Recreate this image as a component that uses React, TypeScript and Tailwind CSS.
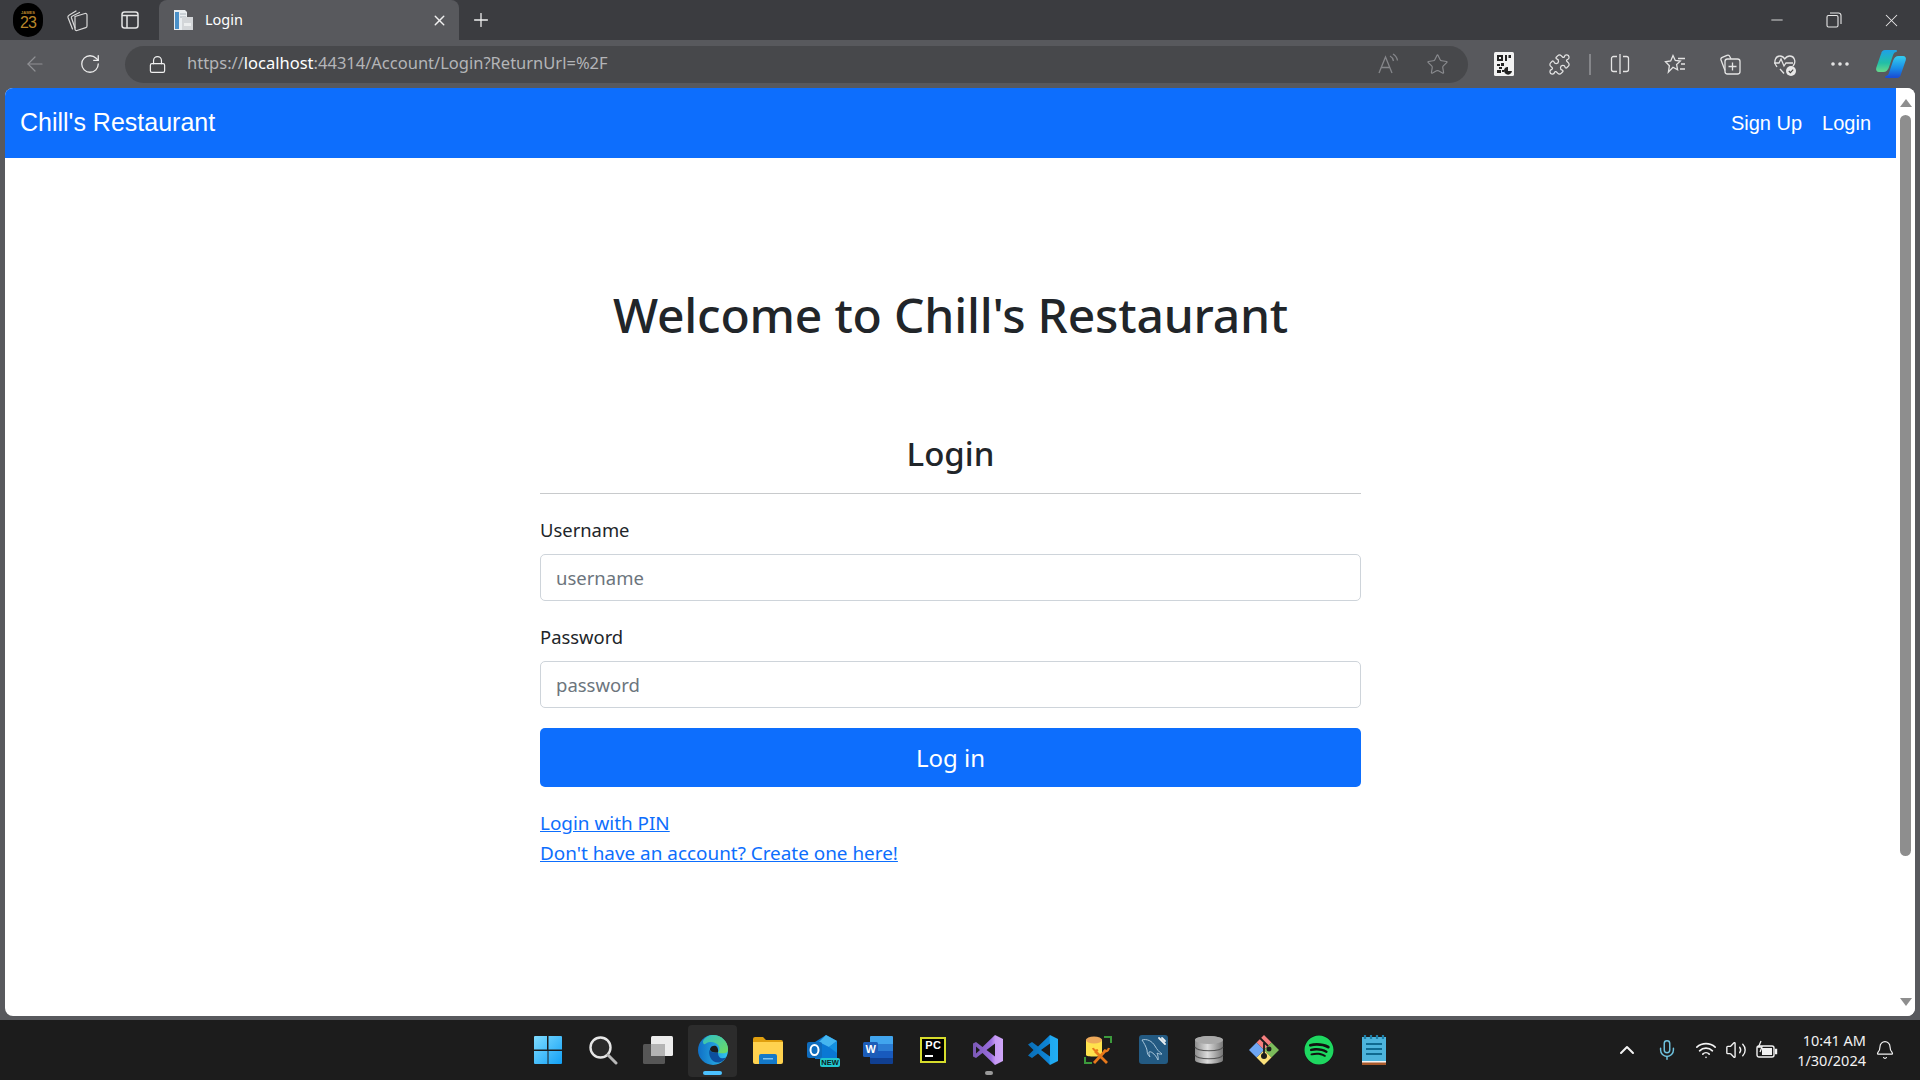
import React from "react";
import { FaSpotify } from "react-icons/fa";
import {
  Plus, X, Minus, ArrowLeft, RotateCw, Lock, Star, Puzzle, MoreHorizontal, ChevronUp, Mic, Wifi, Volume2, Bell,
} from "lucide-react";

const ui = "font-['Noto_Sans','Open_Sans',sans-serif]";

function Slot({ w = "w-[55px]", children }: { w?: string; children: React.ReactNode }) {
  return <div className={`${w} h-full flex items-center justify-center shrink-0`}>{children}</div>;
}

function Profile() {
  return (
    <div className="w-[30px] h-[34px] rounded-full bg-black flex flex-col items-center justify-center">
      <span className="font-['Liberation_Sans',sans-serif] text-[4px] leading-[5px] text-[#b8862a] font-bold">JAMES</span>
      <span className="font-['Liberation_Sans',sans-serif] text-[16px] leading-[16px] text-[#b8862a] tracking-[-1px]">23</span>
    </div>
  );
}

function TabsIcon() {
  return (
    <svg width="24" height="24" viewBox="0 0 24 24" fill="none" stroke="#d8d8d8" strokeWidth="1.200" strokeLinecap="round">
      <path d="M10 8.500 20 5.500c1-.3 2 .4 2 1.500v11c0 1-.5 1.500-1.300 1.700L12 22.500c-1 .3-2-.4-2-1.500z" />
      <path d="M10 20 6.500 10c-.3-1 0-1.700 1-2l7-3.500" />
      <path d="M7.500 21 3 9.500c-.3-1 0-1.800 1-2.300L11 3" />
    </svg>
  );
}
function VerticalTabs() {
  return (
    <svg width="20" height="20" viewBox="0 0 20 20" fill="none" stroke="#e4e4e4" strokeWidth="1.500">
      <rect x="2" y="2" width="16" height="16" rx="2.500" />
      <path d="M2 5.500h16M7 5.500V18" />
    </svg>
  );
}
function Favicon() {
  return (
    <svg width="22" height="22" viewBox="0 0 22 22">
      <path d="M2 1h11l2 2v18H2z" fill="#e9edf0" />
      <rect x="3" y="3" width="4" height="17" fill="#4a90c8" />
      <path d="M8 5h6M8 8h6" stroke="#aab4bc" />
      <rect x="10" y="8" width="11" height="13" fill="#d3d6d9" />
      <rect x="12" y="14" width="7" height="3" fill="#eceeef" />
    </svg>
  );
}
function ReadAloud() {
  return (
    <svg width="24" height="24" viewBox="0 0 24 24" fill="none" stroke="#85868a" strokeWidth="1.300">
      <path d="M3 21 9.500 5 16 21M5.500 15.500h8" />
      <path d="M14 4c2 1 3 2.500 3.500 5M17 2c2.500 1.500 4 3.500 4.500 6.500" />
    </svg>
  );
}
function QrIcon() {
  return (
    <svg width="20" height="24" viewBox="0 0 20 24">
      <rect width="20" height="24" rx="1.500" fill="#f2f2f2" />
      <path d="M3 3h6v6H3zM11 3h2v6h-2zM14.500 3H17v3h-2.500zM3 12h3v2H3zM7 11h3v3H7zM5 15h3v2H5zM3 18h4v3H3zM8 18h2v2H8z" fill="#222" />
      <path d="M11 16a4 4 0 1 0 7 3h-4v-4a4 4 0 0 0-3 1z" fill="#222" />
      <rect x="5" y="5" width="2" height="2" fill="#f2f2f2" />
    </svg>
  );
}
function SplitIcon() {
  return (
    <svg width="22" height="22" viewBox="0 0 22 22" fill="none" stroke="#e4e4e4" strokeWidth="1.300">
      <path d="M8 3.500H4.500A2 2 0 0 0 2.500 5.500v11a2 2 0 0 0 2 2H8M14 3.500h3.500a2 2 0 0 1 2 2v11a2 2 0 0 1-2 2H14M11 1v20" />
    </svg>
  );
}
function FavsIcon() {
  return (
    <svg width="24" height="24" viewBox="0 0 24 24" fill="none" stroke="#e4e4e4" strokeWidth="1.300">
      <path d="M10 3.500l2.300 5 5 .6-3.700 3.500 1 5.200L10 15.200 5.400 20l1-6.300L2.500 9.800l5.200-.8z" />
      <path d="M15 6.500h7M18 12h4M17 17h5" />
    </svg>
  );
}
function CollectionsIcon() {
  return (
    <svg width="24" height="24" viewBox="0 0 24 24" fill="none" stroke="#e4e4e4" strokeWidth="1.300">
      <rect x="7" y="7" width="15" height="15" rx="2.500" />
      <path d="M14.500 10.500v8M10.500 14.500h8" />
      <path d="M7 18.500 3 8c-.4-1.200.1-2.200 1.300-2.700L9 3.300c1.300-.5 2.300 0 2.800 1.200L13 7" />
    </svg>
  );
}
function HeartIcon() {
  return (
    <svg width="26" height="26" viewBox="0 0 26 26" fill="none" stroke="#e4e4e4" strokeWidth="1.300">
      <path d="M5 16 3.500 13.500C2 10 3.500 5 8 5c2.500 0 3.800 1.500 4.800 3 1-1.500 2.500-3 5-3 4.500 0 6 5 4.300 8.500L21 15" />
      <path d="M2 12h5l2-4 3 7 2-3h7" />
      <path d="M8 18l4 4.500" />
      <circle cx="19" cy="20" r="5" fill="#e8e8e8" stroke="none" />
      <path d="M16.800 20l1.600 1.600 2.800-3" stroke="#444" strokeWidth="1.200" />
    </svg>
  );
}
function Copilot() {
  return (
    <svg width="32" height="30" viewBox="0 0 32 30">
      <defs>
        <linearGradient id="cp1" x1="0" y1="0" x2="0" y2="1">
          <stop offset="0" stopColor="#1fa3e4" />
          <stop offset="0.6" stopColor="#22bfa6" />
          <stop offset="1" stopColor="#62d68c" />
        </linearGradient>
        <linearGradient id="cp2" x1="0" y1="0" x2="0" y2="1">
          <stop offset="0" stopColor="#33c8ee" />
          <stop offset="0.55" stopColor="#1a8fe8" />
          <stop offset="1" stopColor="#1a4fd4" />
        </linearGradient>
      </defs>
      <path d="M10 2h11c-2 0-3 1-3.800 3.500L13 18c-.8 2.500-2 4-4.500 4H4c-1.500 0-2.300-1.300-1.800-3L7 5c.5-2 1.500-3 3-3z" fill="url(#cp1)" stroke="url(#cp1)" strokeWidth="2" strokeLinejoin="round" />
      <path d="M22 28H11c2 0 3-1 3.800-3.500L19 12c.8-2.500 2-4 4.500-4H28c1.500 0 2.300 1.300 1.800 3L25 25c-.5 2-1.500 3-3 3z" fill="url(#cp2)" stroke="url(#cp2)" strokeWidth="2" strokeLinejoin="round" />
    </svg>
  );
}

/* taskbar icons */
function WinLogo() {
  return (
    <svg width="30" height="30" viewBox="0 0 30 30">
      <defs>
        <linearGradient id="w1" x1="0" y1="0" x2="1" y2="1">
          <stop offset="0" stopColor="#7fdcff" />
          <stop offset="1" stopColor="#12a0f5" />
        </linearGradient>
      </defs>
      <path d="M1 2a1 1 0 0 1 1-1h12v13.500H1zM15.500 1H28a1 1 0 0 1 1 1v12.500H15.500zM1 16h13.500v13H2a1 1 0 0 1-1-1zM15.500 16H29v12a1 1 0 0 1-1 1H15.500z" fill="url(#w1)" />
    </svg>
  );
}
function SearchIcon() {
  return (
    <svg width="30" height="30" viewBox="0 0 30 30" fill="#2a2a2a">
      <circle cx="12.500" cy="12.500" r="10" strokeWidth="2.400" stroke="#e6e6e6" />
      <path d="M20 20l8 8" strokeWidth="3" strokeLinecap="round" stroke="#b8b8b8" />
    </svg>
  );
}
function TaskView() {
  return (
    <svg width="32" height="30" viewBox="0 0 32 30">
      <rect x="9" y="1" width="22" height="20" rx="1.500" fill="#ececec" />
      <rect x="1" y="9" width="22" height="20" rx="1.500" fill="#5b5b5b" fillOpacity="0.92" />
      <rect x="9" y="9" width="14" height="12" fill="#b4b4b4" />
    </svg>
  );
}
function Edge() {
  return (
    <svg width="32" height="32" viewBox="0 0 32 32">
      <defs>
        <linearGradient id="e1" x1="0" y1="0" x2="1" y2="0">
          <stop offset="0" stopColor="#0f6fc6" />
          <stop offset="1" stopColor="#31c4ee" />
        </linearGradient>
        <linearGradient id="e2" x1="0" y1="0" x2="1" y2="1">
          <stop offset="0" stopColor="#2fc0c8" />
          <stop offset="1" stopColor="#70dc5e" />
        </linearGradient>
      </defs>
      <circle cx="16" cy="16" r="15" fill="url(#e1)" />
      <path d="M6 7C9 2 13 1 16 1c9 0 15 7 15 14 0 2-.5 3-1.500 3.500-2.500 1.200-7 1-8.500 0 2-2 2-4.500.5-7C19 8 13 7 9 9.500 7.500 10.500 6 11 6 7z" fill="url(#e2)" />
      <path d="M21 18.500c-3 0-8 0-8.500-3-1.500 5 1.500 14 10 13 2-.5 5-2.500 6.500-5-3 1.500-8 1.500-8-5z" fill="#0c4f9e" />
      <path d="M13 15c.5-3 4-4 6-3 2 1 2.500 4.500 2 6.500-3 0-8 0-8-3.500z" fill="#1c1c1c" />
    </svg>
  );
}
function Folder() {
  return (
    <svg width="32" height="28" viewBox="0 0 32 28">
      <path d="M1 3a2 2 0 0 1 2-2h8l3 3h15a2 2 0 0 1 2 2v4H1z" fill="#e09f0e" />
      <path d="M1 6h30v20a2 2 0 0 1-2 2H3a2 2 0 0 1-2-2z" fill="#ffd24f" />
      <path d="M7 20a2 2 0 0 1 2-2h14a2 2 0 0 1 2 2v8H7z" fill="#1479c9" />
      <rect x="11" y="22" width="10" height="1.500" fill="#7fc4f0" />
    </svg>
  );
}
function Outlook() {
  return (
    <div className="relative w-[32px] h-[30px]">
      <svg width="32" height="30" viewBox="0 0 32 30" className="absolute left-0 top-0">
        <path d="M8 7 19 0l11 6v18H8z" fill="#0a78d4" />
        <path d="M19 0l11 6-8 6-10-5z" fill="#44b6f0" />
        <path d="M22 12l8-6v12z" fill="#1490df" />
        <rect x="0" y="7" width="15" height="16" rx="2" fill="#0f6cbd" />
        <ellipse cx="7.500" cy="15" rx="4" ry="5" fill="none" stroke="#fff" strokeWidth="2" />
      </svg>
      <span className="absolute right-[-1px] bottom-[-2px] w-[20px] h-[9px] rounded-[2px] bg-[#22c8d0] text-[#0d1c20] font-['Liberation_Sans',sans-serif] font-bold text-[7.500px] leading-[9px] text-center">NEW</span>
    </div>
  );
}
function Word() {
  return (
    <div className="relative w-[30px] h-[28px]">
      <svg width="30" height="28" viewBox="0 0 30 28" className="absolute left-0 top-0">
        <path d="M7 1a1 1 0 0 1 1-1h21a1 1 0 0 1 1 1v7H7z" fill="#41a5ee" />
        <rect x="7" y="8" width="23" height="7" fill="#2b7cd3" />
        <rect x="7" y="15" width="23" height="7" fill="#185abd" />
        <path d="M7 22h23v5a1 1 0 0 1-1 1H8a1 1 0 0 1-1-1z" fill="#103f91" />
        <rect x="0" y="6" width="15" height="15" rx="1.500" fill="#1c5cb8" />
      </svg>
      <span className="absolute left-0 top-[6px] w-[15px] text-center text-white font-['Liberation_Sans',sans-serif] font-bold text-[11px] leading-[15px]">W</span>
    </div>
  );
}
function PyCharm() {
  return (
    <div className="w-[26px] h-[26px] bg-black border-[2px] border-[#d6dc2c] flex flex-col pl-[3px]">
      <span className="text-white font-['Liberation_Sans',sans-serif] font-bold text-[11px] leading-[13px] tracking-[0.5px]">PC</span>
      <span className="w-[8px] h-[2px] bg-white mt-[3px]" />
    </div>
  );
}
function VS() {
  return (
    <svg width="32" height="32" viewBox="0 0 32 32">
      <defs>
        <linearGradient id="vs" x1="0" y1="0" x2="1" y2="0">
          <stop offset="0" stopColor="#7a58b4" />
          <stop offset="0.6" stopColor="#9a6ee0" />
          <stop offset="0.75" stopColor="#c79af5" />
          <stop offset="1" stopColor="#cfa6f8" />
        </linearGradient>
      </defs>
      <path fillRule="evenodd" d="M23 1 10.500 13 4 8 1 9.500v13L4 24l6.500-5L23 31l8-4V5zM23 9.500v13L14.500 16zM4 12.500 8 16l-4 3.500z" fill="url(#vs)" />
    </svg>
  );
}
function VSCode() {
  return (
    <svg width="32" height="32" viewBox="0 0 32 32">
      <defs>
        <linearGradient id="vc" x1="0" y1="0" x2="1" y2="0">
          <stop offset="0" stopColor="#0a6db5" />
          <stop offset="0.7" stopColor="#0e86d8" />
          <stop offset="0.75" stopColor="#1fa8f0" />
          <stop offset="1" stopColor="#22aef5" />
        </linearGradient>
      </defs>
      <path fillRule="evenodd" d="M23 1 11 12.500 5 8 1 10.500 6.500 16 1 21.500 5 24l6-4.500L23 31l8-4V5zM23 9.500v13L14 16z" fill="url(#vc)" />
    </svg>
  );
}
function DbTools() {
  return (
    <svg width="30" height="30" viewBox="0 0 30 30" fill="none">
      <path d="M3 5c0-2 16-2 16 0v15c0 2-16 2-16 0z" fill="#ffe24d" />
      <ellipse cx="11" cy="5" rx="8" ry="3.500" fill="#eda95a" />
      <path d="M21 2h7v6M2 22v6h7" stroke="#3c9a3c" strokeWidth="2" />
      <path d="M11 28 23 15M12 16l12 12" stroke="#e8791b" strokeWidth="2.800" />
      <path d="M10 13c1 3 3 3 5 2M21 15c2 2 4 1 5-2" stroke="#e8791b" strokeWidth="2.200" />
    </svg>
  );
}
function Workbench() {
  return (
    <svg width="29" height="29" viewBox="0 0 29 29" fill="none">
      <rect width="29" height="29" rx="3" fill="#235a82" />
      <path d="M3 5c5-1.500 10 1 13 6 2 3.500 4 6 7 8-2 .5-4-.3-5-1 .8 2.500 1.500 4 1 7-1.500-3-3-5.500-6-7.500-1-.7-2.500-1-3-.5-.2 2 .3 3.500 1 5-2-1.500-3-4-3-7C6.800 11 5 8 3 5z" stroke="#a9c6da" strokeWidth="1" />
      <path d="M20 3l6 6M23 3l3 3" stroke="#e8eef2" strokeWidth="1.800" strokeLinecap="round" />
    </svg>
  );
}
function DbStack() {
  return (
    <svg width="30" height="30" viewBox="0 0 30 30">
      <defs>
        <linearGradient id="db" x1="0" y1="0" x2="1" y2="0">
          <stop offset="0" stopColor="#8e8e8e" />
          <stop offset="0.45" stopColor="#dcdcdc" />
          <stop offset="1" stopColor="#777" />
        </linearGradient>
      </defs>
      <path d="M1 5c0-5 28-5 28 0v20c0 5-28 5-28 0z" fill="url(#db)" />
      <ellipse cx="15" cy="5" rx="14" ry="4" fill="#a8a8a8" />
      <path d="M1 12c2 5 26 5 28 0M1 20c2 5 26 5 28 0" stroke="#555" strokeWidth="1.200" fill="none" />
    </svg>
  );
}
function GitDiamond() {
  return (
    <svg width="32" height="32" viewBox="0 0 32 32">
      <path d="M16 1l7.500 7.500-7.500 7.500-7.500-7.500z" fill="#f57f7f" />
      <path d="M31 16l-7.500 7.500-7.500-7.500 7.500-7.500z" fill="#7cbc5b" />
      <path d="M16 31l-7.500-7.500 7.500-7.500 7.500 7.500z" fill="#fbe07a" />
      <path d="M1 16l7.500-7.500 7.500 7.500-7.500 7.500z" fill="#6fa6f2" />
      <path d="M12 4l8 8M16 9v14" stroke="#1c1c1c" strokeWidth="1.800" fill="none" />
      <circle cx="16" cy="22" r="3" fill="#1c1c1c" />
      <circle cx="21" cy="15" r="2.500" fill="#1c1c1c" />
    </svg>
  );
}
function Notepad() {
  return (
    <svg width="24" height="30" viewBox="0 0 24 30">
      <rect x="0" y="2" width="24" height="27" fill="#4db4dc" />
      <rect x="0" y="26" width="24" height="4" fill="#a8592a" />
      <rect x="0" y="26" width="24" height="1.500" fill="#f2f2f2" />
      <path d="M3 0v4M9 0v4M15 0v4M21 0v4" stroke="#1d7fa8" strokeWidth="2.200" />
      <path d="M4 9h16M4 14h16M4 19h16" stroke="#0f6a90" strokeWidth="2" />
    </svg>
  );
}

function Battery() {
  return (
    <svg width="22" height="20" viewBox="0 0 22 20" fill="none" stroke="#f2f2f2" strokeWidth="1.400">
      <rect x="1" y="6" width="17" height="11" rx="2" />
      <rect x="6" y="8" width="10" height="7" fill="#f2f2f2" stroke="none" />
      <path d="M19 9.500h1.500v4H19" fill="#f2f2f2" />
      <path d="M5 1 2.500 7H6l-2 5" stroke="#f2f2f2" strokeWidth="1.300" />
    </svg>
  );
}

const taskIcons = [
  WinLogo, SearchIcon, TaskView, Edge, Folder, Outlook, Word, PyCharm, VS, VSCode, DbTools, Workbench, DbStack, GitDiamond,
  () => (
    <span className="block w-[30px] h-[30px] rounded-full bg-[#111]">
      <FaSpotify size={30} color="#1ed760" />
    </span>
  ),
  Notepad,
];

function Field({ label, placeholder, type, gap }: { label: string; placeholder: string; type: string; gap: string }) {
  return (
    <div className={gap}>
      <label className="block text-[18.400px] leading-[30px] text-[#212529] mb-[9px]">{label}</label>
      <input
        type={type}
        placeholder={placeholder}
        className="block w-full h-[47px] px-[15px] border border-[#ced4da] rounded-[5px] bg-white text-[18.500px] text-[#212529] placeholder:text-[#6c757d] outline-none"
      />
    </div>
  );
}

export default function App() {
  return (
    <div className={`${ui} w-full h-screen overflow-hidden flex flex-col bg-[#58595d]`}>
      {/* tab strip */}
      <div className="h-[40px] shrink-0 flex bg-[#3b3c40] pl-[12px]">
        <Slot w="w-[32px]"><Profile /></Slot>
        <Slot w="w-[50px] ml-[8px]"><TabsIcon /></Slot>
        <Slot w="w-[48px] ml-[4px]"><VerticalTabs /></Slot>
        <div className="ml-[5px] w-[300px] h-full rounded-t-[8px] bg-[#58595d] flex items-center pl-[13px] pr-[11px]">
          <Favicon />
          <span className="ml-[11px] text-[14.500px] text-white">Login</span>
          <X size={17} color="#f0f0f0" className="ml-auto" />
        </div>
        <Slot w="w-[44px]"><Plus size={22} color="#f0f0f0" strokeWidth={1.4} /></Slot>
        <div className="ml-auto flex h-full">
          <Slot w="w-[57px]"><Minus size={18} color="#e8e8e8" strokeWidth={1.2} /></Slot>
          <Slot w="w-[57px]">
            <svg width="16" height="16" viewBox="0 0 16 16" fill="none" stroke="#e8e8e8" strokeWidth="1.100">
              <rect x="1" y="3.500" width="11" height="11.500" rx="1.500" />
              <path d="M4 1h8.500A2.500 2.500 0 0 1 15 3.500V12" />
            </svg>
          </Slot>
          <Slot w="w-[58px]"><X size={21} color="#e8e8e8" strokeWidth={1.2} /></Slot>
        </div>
      </div>
      {/* toolbar */}
      <div className="h-[48px] shrink-0 flex items-center pl-[7px]">
        <Slot><ArrowLeft size={24} color="#8f9094" strokeWidth={1.2} /></Slot>
        <Slot><RotateCw size={22} color="#ececec" strokeWidth={1.4} /></Slot>
        <div className="ml-[8px] w-[1343px] h-[37px] rounded-full bg-[#47484b] flex items-center pl-[23px] pr-[19px]">
          <Lock size={19} color="#f0f0f0" strokeWidth={1.5} />
          <div className="ml-[20px] -mt-[1px] text-[16.500px] text-[#b4b5b8] whitespace-nowrap">
            https://<span className="text-white">localhost</span>:44314/Account/Login?ReturnUrl=%2F
          </div>
          <div className="ml-auto flex items-center gap-[26px]">
            <ReadAloud />
            <Star size={23} color="#8a8b8f" strokeWidth={1.2} />
          </div>
        </div>
        <div className="ml-[8px] h-full flex items-center">
          <Slot><QrIcon /></Slot>
          <Slot w="w-[56px] mr-[2px]"><Puzzle size={23} color="#e4e4e4" strokeWidth={1.3} /></Slot>
          <div className="w-[2px] h-[21px] bg-[#85868a] shrink-0" />
          <Slot w="w-[55px] ml-[1px]"><SplitIcon /></Slot>
          <Slot><FavsIcon /></Slot>
          <Slot><CollectionsIcon /></Slot>
          <Slot><HeartIcon /></Slot>
          <Slot><MoreHorizontal size={24} color="#e8e8e8" strokeWidth={1.6} /></Slot>
          <Slot w="w-[48px]"><Copilot /></Slot>
        </div>
      </div>
      {/* page */}
      <div className="flex-1 min-h-0 ml-[5px] mr-[5px] mb-[4px] rounded-[8px] overflow-hidden bg-white flex">
        <div className="flex-1 min-w-0 flex flex-col">
          <nav className="h-[70px] shrink-0 bg-[#0d6efd] flex items-center justify-between pl-[15px] pr-[25px] font-['Liberation_Sans',sans-serif] text-white">
            <span className="text-[25px]">Chill's Restaurant</span>
            <div className="flex gap-[20px] text-[20px]">
              <span>Sign Up</span>
              <span>Login</span>
            </div>
          </nav>
          <main className="flex-1 flex flex-col items-center text-[#212529]">
            <h1 className="mt-[127px] text-[48px] leading-[60px] font-medium tracking-[-0.2px]">Welcome to Chill's Restaurant</h1>
            <div className="mt-[88px] w-[821px]">
              <h2 className="text-center text-[33px] leading-[42px] font-medium pb-[18px] border-b border-[#c8cacc] mb-[21px]">Login</h2>
              <Field label="Username" placeholder="username" type="text" gap="mb-[21px]" />
              <Field label="Password" placeholder="password" type="password" gap="mb-5" />
              <button className="w-full h-[59px] rounded-[5px] bg-[#0d6efd] text-white text-[24px] leading-[59px]">Log in</button>
              <div className="mt-[21px] text-[18.900px] leading-[30px] text-[#0d6efd] underline">
                <div>Login with PIN</div>
                <div>Don't have an account? Create one here!</div>
              </div>
            </div>
          </main>
        </div>
        {/* scrollbar */}
        <div className="w-[19px] shrink-0 flex flex-col items-center bg-white">
          <div className="mt-[11px] w-0 h-0 border-l-[6px] border-r-[6px] border-b-[8px] border-l-transparent border-r-transparent border-b-[#8e8e8e]" />
          <div className="mt-[8px] w-[11px] h-[741px] rounded-full bg-[#8e8e8e]" />
          <div className="mt-auto mb-[10px] w-0 h-0 border-l-[6px] border-r-[6px] border-t-[8px] border-l-transparent border-r-transparent border-t-[#8e8e8e]" />
        </div>
      </div>
      {/* taskbar */}
      <div className="h-[60px] shrink-0 bg-[#1c1c1c] flex items-center">
        <div className="ml-[520px] flex items-center h-full">
          {taskIcons.map((Icon, i) => (
            <div key={i} className="relative w-[55.100px] h-full flex items-center justify-center shrink-0">
              {i === 3 && <div className="absolute inset-x-[3px] top-[5px] bottom-[3px] rounded-[4px] bg-[#2c2c2c]" />}
              {i === 3 && <div className="absolute left-[18px] bottom-[5px] w-[19px] h-[4px] rounded-full bg-[#4cc2ff]" />}
              {i === 8 && <div className="absolute left-[24px] bottom-[5px] w-[8px] h-[4px] rounded-full bg-[#9a9a9a]" />}
              <div className="relative -mt-[1px]"><Icon /></div>
            </div>
          ))}
        </div>
        <div className="ml-auto flex items-center h-full pr-[25px] text-white">
          <ChevronUp size={24} color="#f2f2f2" strokeWidth={2} />
          <Mic size={22} color="#6fc3df" strokeWidth={1.6} className="ml-[17px]" />
          <Wifi size={22} color="#f2f2f2" strokeWidth={1.8} className="ml-[17px]" />
          <Volume2 size={22} color="#f2f2f2" strokeWidth={1.5} className="ml-[8px]" />
          <div className="ml-[9px]"><Battery /></div>
          <div className="ml-[18px] w-[70px] text-right text-[14.500px] leading-[20px] text-[#f2f2f2] whitespace-nowrap">
            <div>10:41 AM</div>
            <div>1/30/2024</div>
          </div>
          <Bell size={20} color="#f2f2f2" strokeWidth={1.4} className="ml-[9px]" />
        </div>
      </div>
    </div>
  );
}
